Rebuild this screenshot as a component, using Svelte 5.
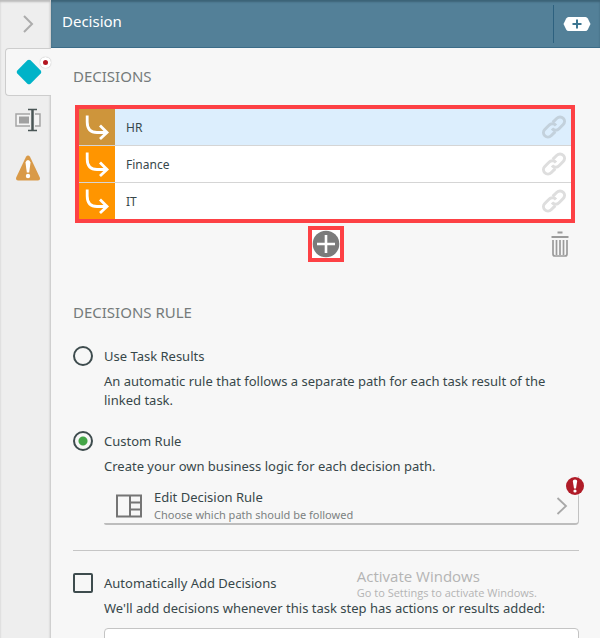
<script lang="ts">
	let decisions = $state([
		{ id: 1, name: 'HR' },
		{ id: 2, name: 'Finance' },
		{ id: 3, name: 'IT' }
	]);
	let selected = $state(1);
	let rule = $state('custom');
	let autoAdd = $state(false);
	let source = $state('');

	function addDecision() {
		const id = Math.max(0, ...decisions.map((d) => d.id)) + 1;
		decisions.push({ id, name: 'Decision ' + id });
		selected = id;
	}

	function removeDecision() {
		decisions = decisions.filter((d) => d.id !== selected);
	}
</script>

<div class="app">
	<nav class="rail">
		<button class="tab" aria-label="Collapse panel">
			<svg width="12" height="20" viewBox="0 0 12 20"><path d="M2 2l8 8-8 8" fill="none" stroke="#acacac" stroke-width="2" /></svg>
		</button>
		<button class="tab active" aria-label="Decision">
			<svg width="26" height="26" viewBox="0 0 26 26"><path d="M11.4 1.3Q13 0 14.6 1.3L24.7 11.4Q26 13 24.7 14.6L14.6 24.7Q13 26 11.4 24.7L1.3 14.6Q0 13 1.3 11.4Z" fill="#00b3c8" /></svg>
			<span class="dot"></span>
		</button>
		<button class="tab" aria-label="Field">
			<svg width="26" height="24" viewBox="0 0 26 24">
				<rect x="1" y="6" width="24" height="12" fill="#f4f4f4" stroke="#a5a5a5" stroke-width="1.5" />
				<rect x="4" y="8.5" width="10" height="7" fill="#a0a0a0" />
				<path d="M17.5 2v20" stroke="#eee" stroke-width="5" />
				<path d="M13 1.5h9M13 22.5h9" stroke="#4a5656" stroke-width="1.5" />
				<path d="M17.5 1v22" stroke="#4a5656" stroke-width="2.5" />
			</svg>
		</button>
		<button class="tab" aria-label="Warnings">
			<svg width="26" height="26" viewBox="0 0 26 26">
				<path d="M11 1.8Q13 -0.8 15 1.8L24.8 22.5Q25.6 25.5 23 25.5H3Q0.4 25.5 1.2 22.5Z" fill="#d99a48" />
				<path d="M10.5 7.5Q11 5 13 5T15.5 7.5L14.2 17.5H11.8Z" fill="#fff" />
				<circle cx="13" cy="21" r="2.2" fill="#fff" />
			</svg>
		</button>
	</nav>

	<main class="panel">
		<header>
			<h1>Decision</h1>
			<button class="add-field" aria-label="Add field">
				<svg width="28" height="16" viewBox="0 0 28 16">
					<path d="M5.5 1H22.5Q24 1 24.8 2.5L27.5 8L24.8 13.5Q24 15 22.5 15H5.5Q4 15 3.2 13.5L0.5 8L3.2 2.5Q4 1 5.5 1Z" fill="#fff" />
					<path d="M14 3.5v9M9.5 8h9" stroke="#3d7691" stroke-width="2" />
				</svg>
			</button>
		</header>

		<div class="content">
			<h2>DECISIONS</h2>
			<ul class="decisions">
				{#each decisions as d (d.id)}
					<li class:selected={d.id === selected}>
						<button class="decision" onclick={() => (selected = d.id)}>
							<span class="arrow">
								<svg width="26" height="28" viewBox="0 0 26 28"><path d="M3.2 2.5V9Q3.2 19.5 13 19.5H22M16 12.5L23 19.5L16 26" fill="none" stroke="#fff" stroke-width="2.8" /></svg>
							</span>
							<span class="name">{d.name}</span>
						</button>
						<button class="link" aria-label="Link {d.name}">
							<svg width="24" height="24" viewBox="0 0 24 24" fill="none" stroke="currentColor" stroke-width="3" stroke-linejoin="round">
								<path d="M10 13.5a4.6 4.6 0 0 0 7 .2l4.200-4.200a4.300 4.300 0 0 0-6.300-6.300l-4.200 4.200" />
								<path d="M14 10.500a4.600 4.600 0 0 0-7-.2l-4.200 4.200a4.300 4.300 0 0 0 6.300 6.300l4.200-4.200" />
							</svg>
						</button>
					</li>
				{/each}
			</ul>

			<div class="actions">
				<button class="add" aria-label="Add decision" onclick={addDecision}>
					<svg width="28" height="28" viewBox="0 0 28 28">
						<circle cx="14" cy="14" r="13.3" fill="#7b7b7b" />
						<path d="M14 5v18M5 14h18" stroke="#fff" stroke-width="2.6" />
					</svg>
				</button>
				<button class="delete" aria-label="Delete decision" onclick={removeDecision}>
					<svg width="18" height="26" viewBox="0 0 18 26" fill="none" stroke="#9b9b9b" stroke-width="1.7">
						<path d="M6.5 1.5h5M0.5 6h17" stroke-width="2" />
						<path d="M2 9V23Q2 25 4 25H14Q16 25 16 23V9M5.5 9V24M9 9V24M12.5 9V24" />
					</svg>
				</button>
			</div>

			<h2>DECISIONS RULE</h2>
			<div class="option">
				<input type="radio" id="rule-task" name="rule" value="task" bind:group={rule} />
				<div class="option-text">
					<label for="rule-task">Use Task Results</label>
					<p>An automatic rule that follows a separate path for each task result of the linked task.</p>
				</div>
			</div>
			<div class="option custom">
				<input type="radio" id="rule-custom" name="rule" value="custom" bind:group={rule} />
				<div class="option-text">
					<label for="rule-custom">Custom Rule</label>
					<p>Create your own business logic for each decision path.</p>
					<button class="edit-rule">
						<svg width="26" height="24" viewBox="0 0 26 24" fill="none" stroke="#757575" stroke-width="2">
							<path d="M1 1.5H25V22.5H1ZM14 1.5V22.5M14 8.5H25M14 15.5H25" />
						</svg>
						<span class="edit-text">
							<span class="edit-title">Edit Decision Rule</span>
							<span class="edit-sub">Choose which path should be followed</span>
						</span>
						<svg width="12" height="18" viewBox="0 0 12 18"><path d="M1.5 1l8.5 8-8.5 8" fill="none" stroke="#a8a8a8" stroke-width="1.8" /></svg>
						<span class="alert">
							<svg width="18" height="18" viewBox="0 0 18 18">
								<circle cx="9" cy="9" r="9" fill="#b01c28" />
								<path d="M6.8 4Q7 2.5 9 2.5T11.2 4L10 11.5H8Z" fill="#fff" />
								<circle cx="9" cy="14" r="1.6" fill="#fff" />
							</svg>
						</span>
					</button>
				</div>
			</div>

			<hr />

			<div class="option">
				<input type="checkbox" id="auto-add" bind:checked={autoAdd} />
				<div class="option-text">
					<label for="auto-add">Automatically Add Decisions</label>
					<p id="auto-hint">We'll add decisions whenever this task step has actions or results added:</p>
					<input class="source" type="text" aria-labelledby="auto-hint" bind:value={source} />
				</div>
			</div>
		</div>
	</main>

	<div class="watermark">
		<div class="watermark-title">Activate Windows</div>
		<div>Go to Settings to activate Windows.</div>
	</div>
</div>

<style>
	:global(body) {
		margin: 0;
	}

	.app {
		position: relative;
		display: flex;
		height: 100vh;
		overflow: hidden;
		background: #f7f7f7;
		color: #37474a;
		font-family: "Noto Sans", "Open Sans", sans-serif;
		font-size: 13px;
		line-height: 19px;
	}

	button {
		display: flex;
		align-items: center;
		padding: 0;
		border: 0;
		background: none;
		color: inherit;
		font: inherit;
		text-align: left;
		cursor: pointer;
	}

	svg {
		display: block;
		flex: none;
	}

	.rail {
		flex: none;
		box-sizing: border-box;
		width: 51px;
		padding-left: 5px;
		background: #eee;
		border-right: 1px solid #d0d0d0;
		box-shadow: inset 0 2px 2px #bbb;
	}

	.tab {
		position: relative;
		box-sizing: border-box;
		justify-content: center;
		width: 46px;
		height: 48px;
	}

	.tab.active {
		background: #f7f7f7;
		border: 1px solid #cdcdcd;
		border-right: 0;
		border-radius: 4px 0 0 4px;
	}

	.dot {
		position: absolute;
		top: 8px;
		right: 0;
		width: 5px;
		height: 5px;
		border: 3px solid #fff;
		border-radius: 50%;
		background: #b3141f;
		box-shadow: 0 0 1px #999;
	}

	.panel {
		flex: 1;
		min-width: 0;
	}

	header {
		display: flex;
		align-items: center;
		justify-content: space-between;
		box-sizing: border-box;
		height: 48px;
		padding-left: 11px;
		background: #538098;
		border-bottom: 1px solid #3b6c88;
		box-shadow: inset 0 2px 2px #3c6276;
		color: #fff;
	}

	h1 {
		margin: 0 0 4px;
		font-size: 15px;
		font-weight: 400;
	}

	.add-field {
		justify-content: center;
		width: 47px;
		height: 38px;
		border-left: 1px solid #2d617f;
	}

	.content {
		padding: 17px 21px 0 22px;
	}

	h2 {
		margin: 0;
		color: #757b7b;
		font-size: 15px;
		font-weight: 400;
		line-height: 22px;
	}

	.decisions {
		margin: 18px 4px 0 2px;
		padding: 0;
		list-style: none;
		border: 4px solid #fd4145;
	}

	li {
		display: flex;
		align-items: center;
		background: #fff;
	}

	li + li {
		border-top: 1px solid #d5d5d5;
	}

	li.selected {
		background: #dceefd;
	}

	.decision {
		flex: 1;
	}

	.arrow {
		display: flex;
		align-items: center;
		justify-content: center;
		width: 36px;
		height: 36px;
		background: #ff9500;
	}

	.selected .arrow {
		background: #ce953b;
	}

	.name {
		padding-left: 11px;
		font-size: 12px;
	}

	.link {
		padding-right: 5px;
		color: #dedede;
	}

	.selected .link {
		color: #c3d1dc;
	}

	.actions {
		display: grid;
		grid-template-columns: 1fr auto 1fr;
		align-items: center;
		margin: 3px 10px 39px 10px;
	}

	.add {
		grid-column: 2;
		background: #fff;
		border: 4px solid #fd4145;
	}

	.delete {
		justify-self: end;
	}

	.option {
		display: flex;
		align-items: flex-start;
		gap: 11px;
	}

	h2 + .option {
		margin-top: 23px;
	}

	.option.custom {
		margin-top: 21px;
	}

	.option-text {
		flex: 1;
		min-width: 0;
	}

	label {
		display: block;
		padding-top: 1px;
	}

	p {
		margin: 6px 0 0;
	}

	input[type='radio'],
	input[type='checkbox'] {
		flex: none;
		appearance: none;
		box-sizing: border-box;
		width: 20px;
		height: 20px;
		margin: 0;
		border: 2px solid #3e4c4e;
	}

	input[type='radio'] {
		border-radius: 50%;
	}

	input[type='radio']:checked {
		background: radial-gradient(circle, #43a547 4px, transparent 5px);
	}

	input[type='checkbox'] {
		border-radius: 2px;
	}

	input[type='checkbox']:checked {
		background: #43a547;
	}

	.edit-rule {
		position: relative;
		box-sizing: border-box;
		width: 100%;
		padding: 13px 10px 0 12px;
		border-right: 1px solid #c2c2c2;
		border-bottom: 2px solid #bdbdbd;
		border-radius: 0 0 4px 2px;
	}

	.edit-text {
		flex: 1;
		padding-left: 12px;
	}

	.edit-title,
	.edit-sub {
		display: block;
		line-height: 17px;
	}

	.edit-sub {
		color: #7c8282;
		font-size: 11px;
	}

	.alert {
		position: absolute;
		top: 0;
		right: -7px;
		border: 1px solid #f7f7f7;
		border-radius: 50%;
	}

	hr {
		height: 1px;
		margin: 25px 0 22px;
		border: 0;
		background: #c6c6c6;
	}

	.source {
		box-sizing: border-box;
		width: 100%;
		height: 36px;
		margin-top: 10px;
		padding: 0 10px;
		border: 1px solid #c4c4c4;
		border-radius: 4px;
		background: #fff;
		font: inherit;
	}

	.watermark {
		position: absolute;
		right: 63px;
		bottom: 39px;
		color: #b4b4b4;
		font-family: "Open Sans", sans-serif;
		font-size: 11px;
		line-height: 13px;
		pointer-events: none;
	}

	.watermark-title {
		font-size: 15px;
		line-height: 20px;
	}
</style>
